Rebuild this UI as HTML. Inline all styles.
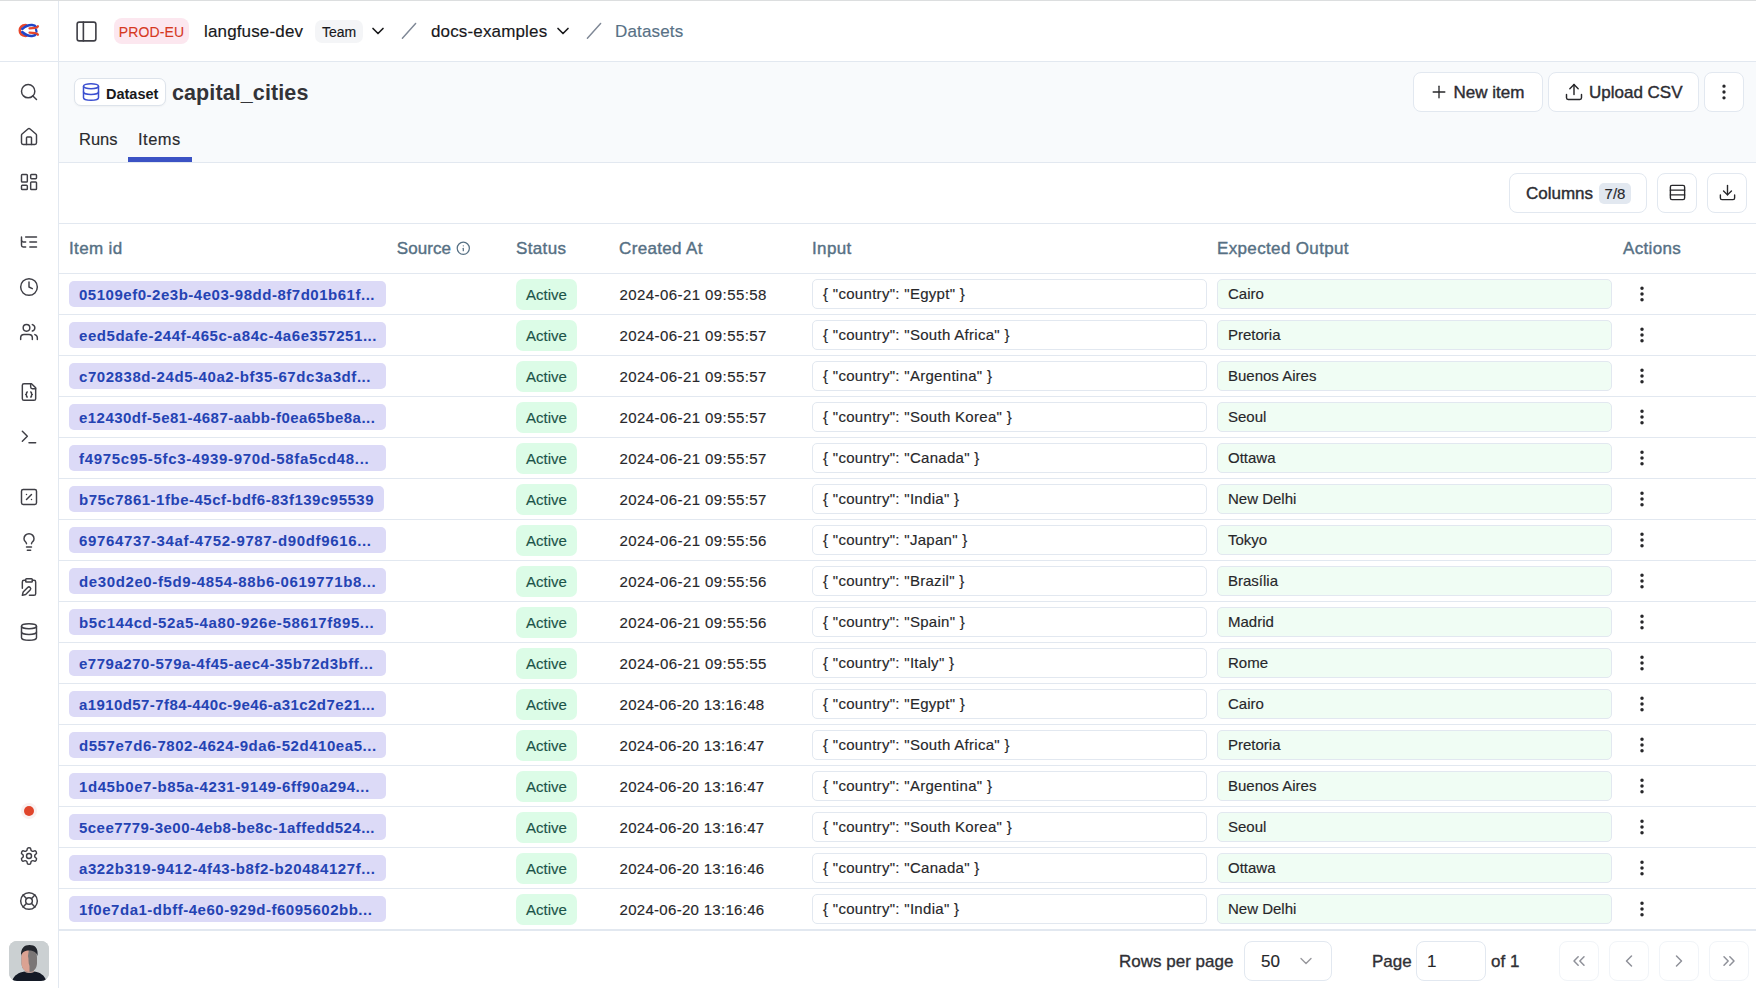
<!DOCTYPE html><html><head><meta charset="utf-8"><style>*{box-sizing:border-box;margin:0;padding:0}
html,body{width:1756px;height:988px;overflow:hidden;background:#fff;font-family:"Liberation Sans",sans-serif;color:#18181b;position:relative}
body{-webkit-text-stroke-width:.15px}
.ic{position:absolute;display:block;overflow:visible}
#topline{position:absolute;left:0;top:0;width:1756px;height:1px;background:#dcdedf;z-index:5}
#sidebar{position:absolute;left:0;top:0;width:59px;height:988px;border-right:1px solid #e2e8f0;background:#fff}
#logo{position:absolute;left:18px;top:23px;width:22px;height:16px}
#logo svg{display:block}
#rec{position:absolute;left:24px;top:806px;width:10px;height:10px;border-radius:50%;background:#e0452b;box-shadow:0 0 0 3px #f9f1f1}
#avatar{position:absolute;left:9px;top:941px;width:40px;height:40px;border-radius:8px;overflow:hidden;background:#c9ccce}
#avatar .hair{position:absolute;left:12px;top:3px;width:18px;height:12px;border-radius:8px 8px 2px 2px;background:#2a2a2e}
#avatar .face{position:absolute;left:13px;top:9px;width:16px;height:22px;border-radius:6px 6px 8px 8px;background:#9a8a84}
#avatar .shirt{position:absolute;left:2px;top:30px;width:36px;height:14px;border-radius:14px 14px 0 0;background:#1e1f26}
#header{position:absolute;left:59px;top:0;width:1697px;height:62px;border-bottom:1px solid #e2e8f0;background:#fff}
#header .ic{margin-left:-59px}
#prod{position:absolute;left:55px;top:18px;width:75px;height:26px;border-radius:8px;background:#fce7ef;color:#d6391e;font-size:14px;line-height:28px;text-align:center;letter-spacing:.1px;-webkit-text-stroke-width:.1px}
.crumb{position:absolute;top:20px;margin-left:-59px;font-size:17px;line-height:24px;letter-spacing:.15px;color:#18181b;white-space:nowrap}
#team{position:absolute;left:256px;top:20px;width:48px;height:23px;border-radius:7px;background:#f4f5f7;font-size:14px;line-height:25px;text-align:center;color:#18181b}
#phead{position:absolute;left:59px;top:62px;width:1697px;height:101px;background:#f8fafc;border-bottom:1px solid #e2e8f0}
#phead .abs{position:absolute}
#dsbadge{position:absolute;left:15px;top:16px;width:92px;height:28px;border:1px solid #dde3eb;box-shadow:0 1px 2px rgba(0,0,0,.04);border-radius:7px;background:#fff}
#dsbadge span{position:absolute;left:31px;top:5.5px;font-size:14.5px;font-weight:700;-webkit-text-stroke-width:0;line-height:18px;color:#18181b}
#title{position:absolute;left:113px;top:16px;letter-spacing:.1px;font-size:21.5px;font-weight:700;-webkit-text-stroke-width:0;line-height:30px;color:#333338;white-space:nowrap}
.btn{position:absolute;height:40px;border:1px solid #e2e8f0;border-radius:8px;background:#fff;margin-left:-59px;margin-top:-62px}
.btn span{position:absolute;top:10px;font-size:17px;font-weight:400;-webkit-text-stroke:.4px #2d2d33;line-height:19px;color:#2d2d33;white-space:nowrap}
#toolbar .btn{margin-top:-163px}
.tab{position:absolute;top:65px;font-size:16.5px;line-height:24px;color:#2a2a2e;margin-left:-59px;white-space:nowrap}
#tabline{position:absolute;left:69px;top:95px;width:64px;height:5px;background:#3b52c4}
#toolbar{position:absolute;left:59px;top:163px;width:1697px;height:60px;background:#fff}
#cnt{position:absolute;left:89px;top:9px;width:32px;height:21px;border-radius:5px;background:#e2e8f0;font-size:15px;line-height:21px;text-align:center;color:#27272a}
.th{position:absolute;top:239px;font-size:17px;font-weight:400;-webkit-text-stroke:.4px #567084;line-height:20px;color:#567084;letter-spacing:.35px;white-space:nowrap}
.hline{position:absolute;left:59px;width:1697px;height:1px;background:#e2e8f0}
.row{position:absolute;left:59px;width:1697px;height:41px;border-bottom:1px solid #e2e8f0}
.row .ic{margin-left:-59px}
.iid{position:absolute;left:10px;top:7px;height:26px;border-radius:5px;background:#dcdaf7;color:#2443b3;font-size:15px;font-weight:700;-webkit-text-stroke-width:0;line-height:28px;padding-left:10px;letter-spacing:.5px;white-space:nowrap;overflow:hidden}
.active{position:absolute;left:457px;top:5px;width:61px;height:31px;border-radius:7px;background:#dcfce7;color:#1d5449;font-size:15px;line-height:31px;text-align:center}
.ts{position:absolute;left:560.5px;top:11px;font-size:15px;line-height:19px;letter-spacing:.42px;color:#27272a;white-space:nowrap}
.inp{position:absolute;left:753px;top:5px;width:395px;height:30px;border:1px solid #e2e8f0;border-radius:5px;background:#fff;font-size:15px;line-height:28px;padding-left:10px;letter-spacing:.3px;color:#27272a;white-space:nowrap}
.exp{position:absolute;left:1158px;top:5px;width:395px;height:30px;border:1px solid #e2e8f0;border-radius:5px;background:#f0fdf4;font-size:15px;line-height:28px;padding-left:10px;letter-spacing:0;color:#27272a;white-space:nowrap}
.ft{position:absolute;top:951.5px;font-size:17px;line-height:20px;color:#303035;-webkit-text-stroke:.35px #303035;white-space:nowrap}
.fbox{position:absolute;top:941px;height:40px;border:1px solid #e2e8f0;border-radius:8px;background:#fff}
.fbox span{position:absolute;top:10px;font-size:17px;line-height:20px;color:#27272a}
.fbox .ic{margin:0}
.pbtn{position:absolute;top:941px;width:40px;height:40px;border:1px solid #f1f4f8;border-radius:8px;background:#fff}
.btn .ic,.pbtn .ic,#dsbadge .ic{margin:0}
</style></head><body>
<div id="topline"></div>
<div id="sidebar">
<div id="logo"><svg width="22" height="16" viewBox="0 0 22 16" fill="none" stroke-linecap="round"><path d="M8.5 2.2 C3.5 1.8 1.8 4.5 1.8 7.5 C1.8 10.5 3.5 13.2 8.5 12.8" stroke="#e8462b" stroke-width="2.6"/><path d="M4.2 6 C7 3.5 10 1.8 14 2 C16.5 2.2 17.5 3 18 3.8" stroke="#1f45c8" stroke-width="2.5"/><path d="M4.2 9 C7 11.5 10 13.2 14 13 C16.5 12.8 17.5 12 18 11.2" stroke="#1f45c8" stroke-width="2.5"/><path d="M11.5 5.3 L17.5 4.8 C19 4.7 19.8 4 20 3.2" stroke="#e8462b" stroke-width="2.2"/><path d="M11.5 9.7 L17.5 10.2 C19 10.3 19.8 11 20 11.8" stroke="#e8462b" stroke-width="2.2"/><path d="M18 6.5 L18.5 8.5" stroke="#1f45c8" stroke-width="2.2"/></svg></div>
<svg class="ic" style="left:19px;top:82px;width:20px;height:20px" viewBox="0 0 24 24" fill="none" stroke="#3f3f46" stroke-width="1.75" stroke-linecap="round" stroke-linejoin="round"><circle cx="11" cy="11" r="8"/><path d="m21 21-4.3-4.3"/></svg>
<svg class="ic" style="left:19px;top:127px;width:20px;height:20px" viewBox="0 0 24 24" fill="none" stroke="#3f3f46" stroke-width="1.75" stroke-linecap="round" stroke-linejoin="round"><path d="M15 21v-8a1 1 0 0 0-1-1h-4a1 1 0 0 0-1 1v8"/><path d="M3 10a2 2 0 0 1 .709-1.528l7-5.999a2 2 0 0 1 2.582 0l7 5.999A2 2 0 0 1 21 10v9a2 2 0 0 1-2 2H5a2 2 0 0 1-2-2z"/></svg>
<svg class="ic" style="left:19px;top:172px;width:20px;height:20px" viewBox="0 0 24 24" fill="none" stroke="#3f3f46" stroke-width="1.75" stroke-linecap="round" stroke-linejoin="round"><rect width="7" height="9" x="3" y="3" rx="1"/><rect width="7" height="5" x="14" y="3" rx="1"/><rect width="7" height="9" x="14" y="12" rx="1"/><rect width="7" height="5" x="3" y="16" rx="1"/></svg>
<svg class="ic" style="left:19px;top:232px;width:20px;height:20px" viewBox="0 0 24 24" fill="none" stroke="#3f3f46" stroke-width="1.75" stroke-linecap="round" stroke-linejoin="round"><path d="M21 12h-8"/><path d="M21 6H8"/><path d="M21 18h-8"/><path d="M3 6v4c0 1.1.9 2 2 2h3"/><path d="M3 10v6c0 1.1.9 2 2 2h3"/></svg>
<svg class="ic" style="left:19px;top:277px;width:20px;height:20px" viewBox="0 0 24 24" fill="none" stroke="#3f3f46" stroke-width="1.75" stroke-linecap="round" stroke-linejoin="round"><circle cx="12" cy="12" r="10"/><polyline points="12 6 12 12 16 14"/></svg>
<svg class="ic" style="left:19px;top:322px;width:20px;height:20px" viewBox="0 0 24 24" fill="none" stroke="#3f3f46" stroke-width="1.75" stroke-linecap="round" stroke-linejoin="round"><path d="M16 21v-2a4 4 0 0 0-4-4H6a4 4 0 0 0-4 4v2"/><circle cx="9" cy="7" r="4"/><path d="M22 21v-2a4 4 0 0 0-3-3.87"/><path d="M16 3.13a4 4 0 0 1 0 7.75"/></svg>
<svg class="ic" style="left:19px;top:382px;width:20px;height:20px" viewBox="0 0 24 24" fill="none" stroke="#3f3f46" stroke-width="1.75" stroke-linecap="round" stroke-linejoin="round"><path d="M15 2H6a2 2 0 0 0-2 2v16a2 2 0 0 0 2 2h12a2 2 0 0 0 2-2V7Z"/><path d="M14 2v4a2 2 0 0 0 2 2h4"/><path d="M10 12a1 1 0 0 0-1 1v1a1 1 0 0 1-1 1 1 1 0 0 1 1 1v1a1 1 0 0 0 1 1"/><path d="M14 18a1 1 0 0 0 1-1v-1a1 1 0 0 1 1-1 1 1 0 0 1-1-1v-1a1 1 0 0 0-1-1"/></svg>
<svg class="ic" style="left:19px;top:427px;width:20px;height:20px" viewBox="0 0 24 24" fill="none" stroke="#3f3f46" stroke-width="1.75" stroke-linecap="round" stroke-linejoin="round"><polyline points="4 17 10 11 4 5"/><line x1="12" x2="20" y1="19" y2="19"/></svg>
<svg class="ic" style="left:19px;top:487px;width:20px;height:20px" viewBox="0 0 24 24" fill="none" stroke="#3f3f46" stroke-width="1.75" stroke-linecap="round" stroke-linejoin="round"><rect width="18" height="18" x="3" y="3" rx="2"/><path d="m15 9-6 6"/><path d="M9 9h.01"/><path d="M15 15h.01"/></svg>
<svg class="ic" style="left:19px;top:532px;width:20px;height:20px" viewBox="0 0 24 24" fill="none" stroke="#3f3f46" stroke-width="1.75" stroke-linecap="round" stroke-linejoin="round"><path d="M15 14c.2-1 .7-1.7 1.5-2.5 1-.9 1.5-2.2 1.5-3.5A6 6 0 0 0 6 8c0 1 .2 2.2 1.5 3.5.7.7 1.3 1.5 1.5 2.5"/><path d="M9 18h6"/><path d="M10 22h4"/></svg>
<svg class="ic" style="left:19px;top:577px;width:20px;height:20px" viewBox="0 0 24 24" fill="none" stroke="#3f3f46" stroke-width="1.75" stroke-linecap="round" stroke-linejoin="round"><rect width="8" height="4" x="8" y="2" rx="1"/><path d="M10.4 12.6a2 2 0 0 1 3 3L8 21l-4 1 1-4Z"/><path d="M16 4h2a2 2 0 0 1 2 2v14a2 2 0 0 1-2 2h-5.5"/><path d="M4 13.5V6a2 2 0 0 1 2-2h2"/></svg>
<svg class="ic" style="left:19px;top:622px;width:20px;height:20px" viewBox="0 0 24 24" fill="none" stroke="#3f3f46" stroke-width="1.75" stroke-linecap="round" stroke-linejoin="round"><ellipse cx="12" cy="5" rx="9" ry="3"/><path d="M3 5V19A9 3 0 0 0 21 19V5"/><path d="M3 12A9 3 0 0 0 21 12"/></svg>
<svg class="ic" style="left:19px;top:846px;width:20px;height:20px" viewBox="0 0 24 24" fill="none" stroke="#3f3f46" stroke-width="1.75" stroke-linecap="round" stroke-linejoin="round"><path d="M12.22 2h-.44a2 2 0 0 0-2 2v.18a2 2 0 0 1-1 1.73l-.43.25a2 2 0 0 1-2 0l-.15-.08a2 2 0 0 0-2.73.73l-.22.38a2 2 0 0 0 .73 2.73l.15.1a2 2 0 0 1 1 1.72v.51a2 2 0 0 1-1 1.74l-.15.09a2 2 0 0 0-.73 2.73l.22.38a2 2 0 0 0 2.73.73l.15-.08a2 2 0 0 1 2 0l.43.25a2 2 0 0 1 1 1.73V20a2 2 0 0 0 2 2h.44a2 2 0 0 0 2-2v-.18a2 2 0 0 1 1-1.73l.43-.25a2 2 0 0 1 2 0l.15.08a2 2 0 0 0 2.73-.73l.22-.39a2 2 0 0 0-.73-2.73l-.15-.08a2 2 0 0 1-1-1.74v-.5a2 2 0 0 1 1-1.74l.15-.09a2 2 0 0 0 .73-2.73l-.22-.38a2 2 0 0 0-2.73-.73l-.15.08a2 2 0 0 1-2 0l-.43-.25a2 2 0 0 1-1-1.73V4a2 2 0 0 0-2-2z"/><circle cx="12" cy="12" r="3"/></svg>
<svg class="ic" style="left:19px;top:891px;width:20px;height:20px" viewBox="0 0 24 24" fill="none" stroke="#3f3f46" stroke-width="1.75" stroke-linecap="round" stroke-linejoin="round"><circle cx="12" cy="12" r="10"/><path d="m4.93 4.93 4.24 4.24"/><path d="m14.83 9.17 4.24-4.24"/><path d="m14.83 14.83 4.24 4.24"/><path d="m9.17 14.83-4.24 4.24"/><circle cx="12" cy="12" r="4"/></svg>
<div style="position:absolute;left:0;top:61px;width:58px;height:1px;background:#e2e8f0"></div>
<div id="rec"></div>
<div id="avatar"><svg width="40" height="40" viewBox="0 0 40 40"><rect width="40" height="40" fill="#cbd0d2"/><rect x="16" y="25" width="9" height="8" fill="#b49a93"/><path d="M12.5 17 C12.5 10 15.5 8 20 8 C25 8 28 10 28 17 L28 22 C28 28 24 31 20.5 31 C16.5 31 12.5 28 12.5 22 Z" fill="#7a7676"/><path d="M20 8 C15.5 8 12.5 10 12.5 17 L12.5 22 C12.5 28 16.5 31 20.5 31 L20.5 25 C19 22 20 18 19 15 Z" fill="#dba292"/><path d="M12 15 C11.5 7 15.5 4 20.5 4 C26 4 29.5 7 28.5 15 C27.5 11 24 9.5 20 9.5 C16 9.5 13 11 12 15 Z" fill="#23262d"/><path d="M3 40 C5 34 10 31.5 15.5 30.5 C18 32.5 23 32.5 25.5 30.5 C31 31.5 35.5 34 37.5 40 Z" fill="#141a26"/></svg></div>
</div>
<div id="header">
<svg class="ic" style="left:74px;top:18.5px;width:25px;height:25px" viewBox="0 0 24 24" fill="none" stroke="#3f3f46" stroke-width="1.55" stroke-linecap="round" stroke-linejoin="round"><rect width="18" height="18" x="3" y="3" rx="2"/><path d="M9 3v18"/></svg>
<div id="prod">PROD-EU</div>
<div class="crumb" style="left:204px">langfuse-dev</div>
<div id="team">Team</div>
<svg class="ic" style="left:368px;top:21px;width:20px;height:20px" viewBox="0 0 24 24" fill="none" stroke="#18181b" stroke-width="2" stroke-linecap="round" stroke-linejoin="round"><path d="m6 9 6 6 6-6"/></svg>
<svg class="ic" style="left:399px;top:21px;width:20px;height:20px" viewBox="0 0 20 20"><path d="M3.4 17.3 L16.6 2.4" stroke="#7f8896" stroke-width="1.45" stroke-linecap="round"/></svg>
<div class="crumb" style="left:431px">docs-examples</div>
<svg class="ic" style="left:553px;top:21px;width:20px;height:20px" viewBox="0 0 24 24" fill="none" stroke="#18181b" stroke-width="2" stroke-linecap="round" stroke-linejoin="round"><path d="m6 9 6 6 6-6"/></svg>
<svg class="ic" style="left:584px;top:21px;width:20px;height:20px" viewBox="0 0 20 20"><path d="M3.4 17.3 L16.6 2.4" stroke="#7f8896" stroke-width="1.45" stroke-linecap="round"/></svg>
<div class="crumb" style="left:615px;color:#587186">Datasets</div>
</div>
<div id="phead">
<div id="dsbadge"><svg class="ic" style="left:6px;top:3px;width:20px;height:20px" viewBox="0 0 24 24" fill="none" stroke="#3b4fd0" stroke-width="1.8" stroke-linecap="round" stroke-linejoin="round"><ellipse cx="12" cy="5" rx="9" ry="3"/><path d="M3 5V19A9 3 0 0 0 21 19V5"/><path d="M3 12A9 3 0 0 0 21 12"/></svg><span>Dataset</span></div>
<div id="title">capital_cities</div>
<div class="btn" style="left:1413px;top:72px;width:130px"><svg class="ic" style="left:15px;top:8.5px;width:20px;height:20px" viewBox="0 0 24 24" fill="none" stroke="#27272a" stroke-width="1.6" stroke-linecap="round" stroke-linejoin="round"><path d="M5 12h14"/><path d="M12 5v14"/></svg><span style="left:39.5px">New item</span></div>
<div class="btn" style="left:1548px;top:72px;width:151px"><svg class="ic" style="left:15px;top:8.5px;width:20px;height:20px" viewBox="0 0 24 24" fill="none" stroke="#27272a" stroke-width="1.75" stroke-linecap="round" stroke-linejoin="round"><path d="M21 15v4a2 2 0 0 1-2 2H5a2 2 0 0 1-2-2v-4"/><polyline points="17 8 12 3 7 8"/><line x1="12" x2="12" y1="3" y2="15"/></svg><span style="left:40px">Upload CSV</span></div>
<div class="btn" style="left:1704px;top:72px;width:40px"><svg class="ic" style="left:8.5px;top:8.5px;width:20px;height:20px" viewBox="0 0 24 24" fill="none" stroke="#27272a" stroke-width="2" stroke-linecap="round" stroke-linejoin="round"><circle cx="12" cy="12" r="1"/><circle cx="12" cy="5" r="1"/><circle cx="12" cy="19" r="1"/></svg></div>
<div class="tab" style="left:79px">Runs</div>
<div class="tab" style="left:138px;letter-spacing:.5px">Items</div>
<div id="tabline"></div>
</div>
<div id="toolbar">
<div class="btn" style="left:1509px;top:173px;width:138px;height:40px"><span style="left:16px">Columns</span><div id="cnt">7/8</div></div>
<div class="btn" style="left:1657px;top:173px;width:40px;height:40px"><svg class="ic" style="left:9.5px;top:9px;width:19px;height:19px" viewBox="0 0 24 24" fill="none" stroke="#27272a" stroke-width="1.75" stroke-linecap="round" stroke-linejoin="round"><rect width="18" height="18" x="3" y="3" rx="2"/><path d="M21 9H3"/><path d="M21 15H3"/></svg></div>
<div class="btn" style="left:1707px;top:173px;width:40px;height:40px"><svg class="ic" style="left:9.5px;top:8.5px;width:19px;height:19px" viewBox="0 0 24 24" fill="none" stroke="#27272a" stroke-width="1.75" stroke-linecap="round" stroke-linejoin="round"><path d="M21 15v4a2 2 0 0 1-2 2H5a2 2 0 0 1-2-2v-4"/><polyline points="7 10 12 15 17 10"/><line x1="12" x2="12" y1="15" y2="3"/></svg></div>
</div>
<div class="th" style="left:69px">Item id</div>
<div class="th" style="left:396.8px;letter-spacing:.05px">Source</div>
<div class="th" style="left:516px">Status</div>
<div class="th" style="left:619px">Created At</div>
<div class="th" style="left:812px">Input</div>
<div class="th" style="left:1217px">Expected Output</div>
<div class="th" style="left:1623px">Actions</div>
<svg class="ic" style="left:456.2px;top:241.2px;width:14.6px;height:14.6px" viewBox="0 0 24 24" fill="none" stroke="#567084" stroke-width="2.05" stroke-linecap="round" stroke-linejoin="round"><circle cx="12" cy="12" r="10"/><path d="M12 16v-4"/><path d="M12 8h.01"/></svg>
<div class="hline" style="top:223px"></div>
<div class="hline" style="top:273px"></div>
<div class="row" style="top:274px">
<div class="iid" style="width:317px;letter-spacing:0.519px">05109ef0-2e3b-4e03-98dd-8f7d01b61f...</div>
<div class="active">Active</div>
<div class="ts">2024-06-21 09:55:58</div>
<div class="inp">{ "country": "Egypt" }</div>
<div class="exp">Cairo</div>
<svg class="ic" style="left:1632px;top:10px;width:20px;height:20px" viewBox="0 0 24 24" fill="none" stroke="#27272a" stroke-width="2.2" stroke-linecap="round" stroke-linejoin="round"><circle cx="12" cy="12" r="1"/><circle cx="12" cy="5" r="1"/><circle cx="12" cy="19" r="1"/></svg>
</div>
<div class="row" style="top:315px">
<div class="iid" style="width:317px;letter-spacing:0.550px">eed5dafe-244f-465c-a84c-4a6e357251...</div>
<div class="active">Active</div>
<div class="ts">2024-06-21 09:55:57</div>
<div class="inp">{ "country": "South Africa" }</div>
<div class="exp">Pretoria</div>
<svg class="ic" style="left:1632px;top:10px;width:20px;height:20px" viewBox="0 0 24 24" fill="none" stroke="#27272a" stroke-width="2.2" stroke-linecap="round" stroke-linejoin="round"><circle cx="12" cy="12" r="1"/><circle cx="12" cy="5" r="1"/><circle cx="12" cy="19" r="1"/></svg>
</div>
<div class="row" style="top:356px">
<div class="iid" style="width:317px;letter-spacing:0.563px">c702838d-24d5-40a2-bf35-67dc3a3df...</div>
<div class="active">Active</div>
<div class="ts">2024-06-21 09:55:57</div>
<div class="inp">{ "country": "Argentina" }</div>
<div class="exp">Buenos Aires</div>
<svg class="ic" style="left:1632px;top:10px;width:20px;height:20px" viewBox="0 0 24 24" fill="none" stroke="#27272a" stroke-width="2.2" stroke-linecap="round" stroke-linejoin="round"><circle cx="12" cy="12" r="1"/><circle cx="12" cy="5" r="1"/><circle cx="12" cy="19" r="1"/></svg>
</div>
<div class="row" style="top:397px">
<div class="iid" style="width:317px;letter-spacing:0.458px">e12430df-5e81-4687-aabb-f0ea65be8a...</div>
<div class="active">Active</div>
<div class="ts">2024-06-21 09:55:57</div>
<div class="inp">{ "country": "South Korea" }</div>
<div class="exp">Seoul</div>
<svg class="ic" style="left:1632px;top:10px;width:20px;height:20px" viewBox="0 0 24 24" fill="none" stroke="#27272a" stroke-width="2.2" stroke-linecap="round" stroke-linejoin="round"><circle cx="12" cy="12" r="1"/><circle cx="12" cy="5" r="1"/><circle cx="12" cy="19" r="1"/></svg>
</div>
<div class="row" style="top:438px">
<div class="iid" style="width:317px;letter-spacing:0.677px">f4975c95-5fc3-4939-970d-58fa5cd48...</div>
<div class="active">Active</div>
<div class="ts">2024-06-21 09:55:57</div>
<div class="inp">{ "country": "Canada" }</div>
<div class="exp">Ottawa</div>
<svg class="ic" style="left:1632px;top:10px;width:20px;height:20px" viewBox="0 0 24 24" fill="none" stroke="#27272a" stroke-width="2.2" stroke-linecap="round" stroke-linejoin="round"><circle cx="12" cy="12" r="1"/><circle cx="12" cy="5" r="1"/><circle cx="12" cy="19" r="1"/></svg>
</div>
<div class="row" style="top:479px">
<div class="iid" style="width:315px;letter-spacing:0.506px">b75c7861-1fbe-45cf-bdf6-83f139c95539</div>
<div class="active">Active</div>
<div class="ts">2024-06-21 09:55:57</div>
<div class="inp">{ "country": "India" }</div>
<div class="exp">New Delhi</div>
<svg class="ic" style="left:1632px;top:10px;width:20px;height:20px" viewBox="0 0 24 24" fill="none" stroke="#27272a" stroke-width="2.2" stroke-linecap="round" stroke-linejoin="round"><circle cx="12" cy="12" r="1"/><circle cx="12" cy="5" r="1"/><circle cx="12" cy="19" r="1"/></svg>
</div>
<div class="row" style="top:520px">
<div class="iid" style="width:317px;letter-spacing:0.646px">69764737-34af-4752-9787-d90df9616...</div>
<div class="active">Active</div>
<div class="ts">2024-06-21 09:55:56</div>
<div class="inp">{ "country": "Japan" }</div>
<div class="exp">Tokyo</div>
<svg class="ic" style="left:1632px;top:10px;width:20px;height:20px" viewBox="0 0 24 24" fill="none" stroke="#27272a" stroke-width="2.2" stroke-linecap="round" stroke-linejoin="round"><circle cx="12" cy="12" r="1"/><circle cx="12" cy="5" r="1"/><circle cx="12" cy="19" r="1"/></svg>
</div>
<div class="row" style="top:561px">
<div class="iid" style="width:317px;letter-spacing:0.614px">de30d2e0-f5d9-4854-88b6-0619771b8...</div>
<div class="active">Active</div>
<div class="ts">2024-06-21 09:55:56</div>
<div class="inp">{ "country": "Brazil" }</div>
<div class="exp">Brasília</div>
<svg class="ic" style="left:1632px;top:10px;width:20px;height:20px" viewBox="0 0 24 24" fill="none" stroke="#27272a" stroke-width="2.2" stroke-linecap="round" stroke-linejoin="round"><circle cx="12" cy="12" r="1"/><circle cx="12" cy="5" r="1"/><circle cx="12" cy="19" r="1"/></svg>
</div>
<div class="row" style="top:602px">
<div class="iid" style="width:317px;letter-spacing:0.626px">b5c144cd-52a5-4a80-926e-58617f895...</div>
<div class="active">Active</div>
<div class="ts">2024-06-21 09:55:56</div>
<div class="inp">{ "country": "Spain" }</div>
<div class="exp">Madrid</div>
<svg class="ic" style="left:1632px;top:10px;width:20px;height:20px" viewBox="0 0 24 24" fill="none" stroke="#27272a" stroke-width="2.2" stroke-linecap="round" stroke-linejoin="round"><circle cx="12" cy="12" r="1"/><circle cx="12" cy="5" r="1"/><circle cx="12" cy="19" r="1"/></svg>
</div>
<div class="row" style="top:643px">
<div class="iid" style="width:317px;letter-spacing:0.519px">e779a270-579a-4f45-aec4-35b72d3bff...</div>
<div class="active">Active</div>
<div class="ts">2024-06-21 09:55:55</div>
<div class="inp">{ "country": "Italy" }</div>
<div class="exp">Rome</div>
<svg class="ic" style="left:1632px;top:10px;width:20px;height:20px" viewBox="0 0 24 24" fill="none" stroke="#27272a" stroke-width="2.2" stroke-linecap="round" stroke-linejoin="round"><circle cx="12" cy="12" r="1"/><circle cx="12" cy="5" r="1"/><circle cx="12" cy="19" r="1"/></svg>
</div>
<div class="row" style="top:684px">
<div class="iid" style="width:317px;letter-spacing:0.408px">a1910d57-7f84-440c-9e46-a31c2d7e21...</div>
<div class="active">Active</div>
<div class="ts" style="letter-spacing:.3px">2024-06-20 13:16:48</div>
<div class="inp">{ "country": "Egypt" }</div>
<div class="exp">Cairo</div>
<svg class="ic" style="left:1632px;top:10px;width:20px;height:20px" viewBox="0 0 24 24" fill="none" stroke="#27272a" stroke-width="2.2" stroke-linecap="round" stroke-linejoin="round"><circle cx="12" cy="12" r="1"/><circle cx="12" cy="5" r="1"/><circle cx="12" cy="19" r="1"/></svg>
</div>
<div class="row" style="top:725px">
<div class="iid" style="width:317px;letter-spacing:0.557px">d557e7d6-7802-4624-9da6-52d410ea5...</div>
<div class="active">Active</div>
<div class="ts" style="letter-spacing:.3px">2024-06-20 13:16:47</div>
<div class="inp">{ "country": "South Africa" }</div>
<div class="exp">Pretoria</div>
<svg class="ic" style="left:1632px;top:10px;width:20px;height:20px" viewBox="0 0 24 24" fill="none" stroke="#27272a" stroke-width="2.2" stroke-linecap="round" stroke-linejoin="round"><circle cx="12" cy="12" r="1"/><circle cx="12" cy="5" r="1"/><circle cx="12" cy="19" r="1"/></svg>
</div>
<div class="row" style="top:766px">
<div class="iid" style="width:317px;letter-spacing:0.574px">1d45b0e7-b85a-4231-9149-6ff90a294...</div>
<div class="active">Active</div>
<div class="ts" style="letter-spacing:.3px">2024-06-20 13:16:47</div>
<div class="inp">{ "country": "Argentina" }</div>
<div class="exp">Buenos Aires</div>
<svg class="ic" style="left:1632px;top:10px;width:20px;height:20px" viewBox="0 0 24 24" fill="none" stroke="#27272a" stroke-width="2.2" stroke-linecap="round" stroke-linejoin="round"><circle cx="12" cy="12" r="1"/><circle cx="12" cy="5" r="1"/><circle cx="12" cy="19" r="1"/></svg>
</div>
<div class="row" style="top:807px">
<div class="iid" style="width:317px;letter-spacing:0.450px">5cee7779-3e00-4eb8-be8c-1affedd524...</div>
<div class="active">Active</div>
<div class="ts" style="letter-spacing:.3px">2024-06-20 13:16:47</div>
<div class="inp">{ "country": "South Korea" }</div>
<div class="exp">Seoul</div>
<svg class="ic" style="left:1632px;top:10px;width:20px;height:20px" viewBox="0 0 24 24" fill="none" stroke="#27272a" stroke-width="2.2" stroke-linecap="round" stroke-linejoin="round"><circle cx="12" cy="12" r="1"/><circle cx="12" cy="5" r="1"/><circle cx="12" cy="19" r="1"/></svg>
</div>
<div class="row" style="top:848px">
<div class="iid" style="width:317px;letter-spacing:0.575px">a322b319-9412-4f43-b8f2-b20484127f...</div>
<div class="active">Active</div>
<div class="ts" style="letter-spacing:.3px">2024-06-20 13:16:46</div>
<div class="inp">{ "country": "Canada" }</div>
<div class="exp">Ottawa</div>
<svg class="ic" style="left:1632px;top:10px;width:20px;height:20px" viewBox="0 0 24 24" fill="none" stroke="#27272a" stroke-width="2.2" stroke-linecap="round" stroke-linejoin="round"><circle cx="12" cy="12" r="1"/><circle cx="12" cy="5" r="1"/><circle cx="12" cy="19" r="1"/></svg>
</div>
<div class="row" style="top:889px">
<div class="iid" style="width:317px;letter-spacing:0.517px">1f0e7da1-dbff-4e60-929d-f6095602bb...</div>
<div class="active">Active</div>
<div class="ts" style="letter-spacing:.3px">2024-06-20 13:16:46</div>
<div class="inp">{ "country": "India" }</div>
<div class="exp">New Delhi</div>
<svg class="ic" style="left:1632px;top:10px;width:20px;height:20px" viewBox="0 0 24 24" fill="none" stroke="#27272a" stroke-width="2.2" stroke-linecap="round" stroke-linejoin="round"><circle cx="12" cy="12" r="1"/><circle cx="12" cy="5" r="1"/><circle cx="12" cy="19" r="1"/></svg>
</div>
<div class="hline" style="top:929px;height:2px"></div>
<div class="ft" style="left:1119px">Rows per page</div>
<div class="fbox" style="left:1244px;width:88px"><span style="left:16px">50</span><svg class="ic" style="left:50.5px;top:8.5px;width:20px;height:20px;opacity:.6" viewBox="0 0 24 24" fill="none" stroke="#52525b" stroke-width="1.6" stroke-linecap="round" stroke-linejoin="round"><path d="m6 9 6 6 6-6"/></svg></div>
<div class="ft" style="left:1372px">Page</div>
<div class="fbox" style="left:1416px;width:70px"><span style="left:10px;top:10px">1</span></div>
<div class="ft" style="left:1491px">of 1</div>
<div class="pbtn" style="left:1559px"><svg class="ic" style="left:8.5px;top:8.5px;width:20px;height:20px" viewBox="0 0 24 24" fill="none" stroke="#8f9199" stroke-width="1.8" stroke-linecap="round" stroke-linejoin="round"><path d="m11 17-5-5 5-5"/><path d="m18 17-5-5 5-5"/></svg></div>
<div class="pbtn" style="left:1609px"><svg class="ic" style="left:8.5px;top:8.5px;width:20px;height:20px" viewBox="0 0 24 24" fill="none" stroke="#8f9199" stroke-width="1.8" stroke-linecap="round" stroke-linejoin="round"><path d="m15 18-6-6 6-6"/></svg></div>
<div class="pbtn" style="left:1659px"><svg class="ic" style="left:8.5px;top:8.5px;width:20px;height:20px" viewBox="0 0 24 24" fill="none" stroke="#8f9199" stroke-width="1.8" stroke-linecap="round" stroke-linejoin="round"><path d="m9 18 6-6-6-6"/></svg></div>
<div class="pbtn" style="left:1709px"><svg class="ic" style="left:8.5px;top:8.5px;width:20px;height:20px" viewBox="0 0 24 24" fill="none" stroke="#8f9199" stroke-width="1.8" stroke-linecap="round" stroke-linejoin="round"><path d="m6 17 5-5-5-5"/><path d="m13 17 5-5-5-5"/></svg></div>
</body></html>
